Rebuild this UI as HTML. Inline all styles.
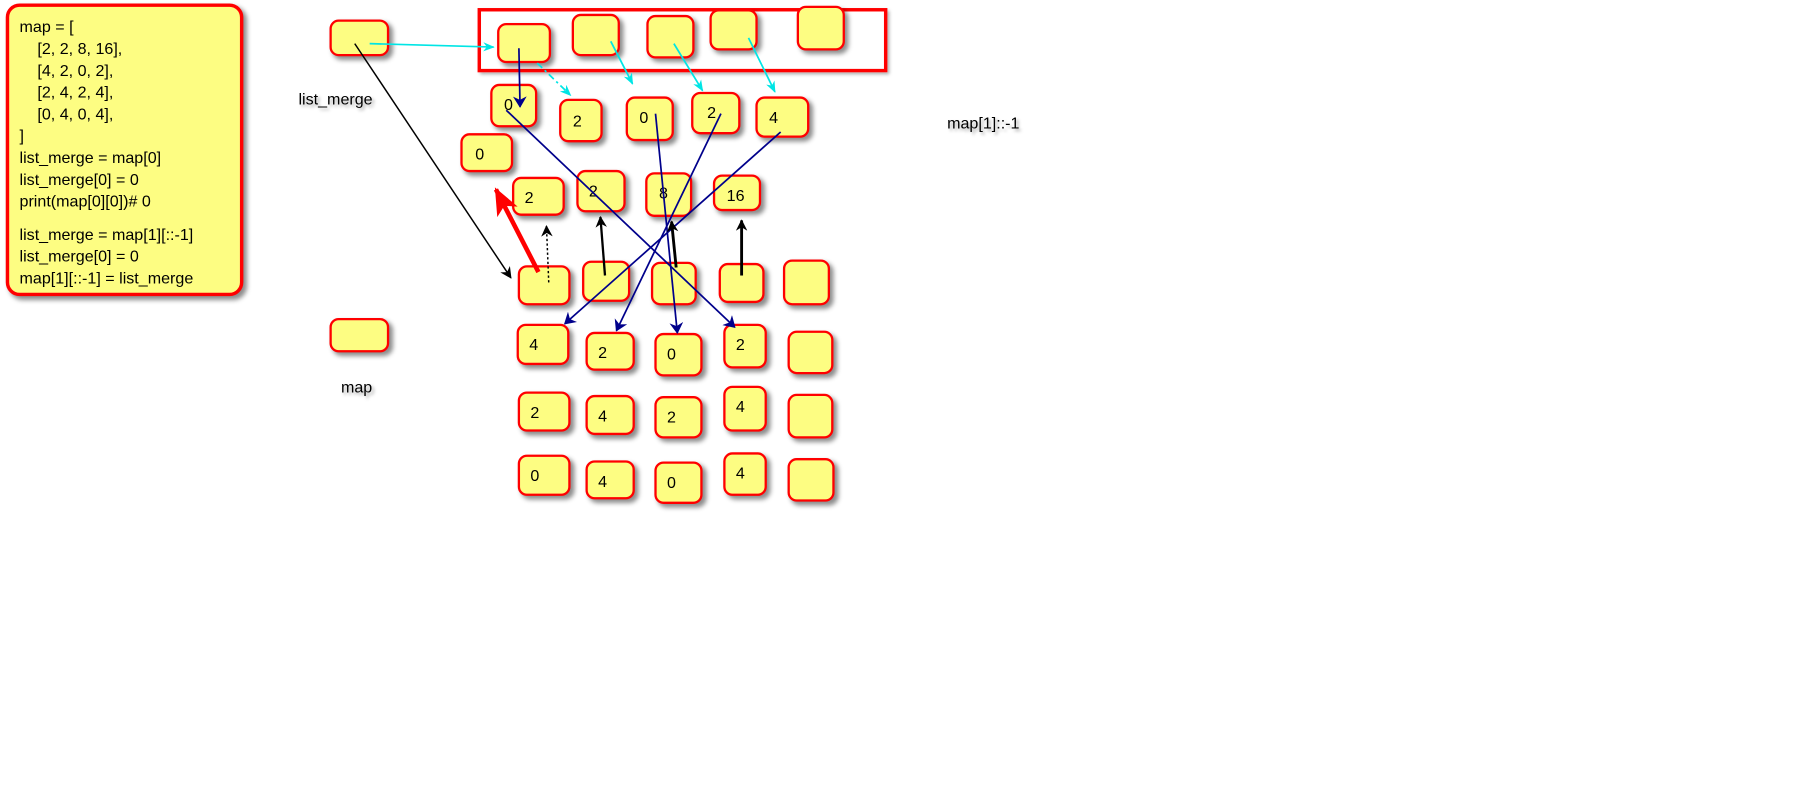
<!DOCTYPE html>
<html><head><meta charset="utf-8"><style>
html,body{margin:0;padding:0;background:#fff;width:1800px;height:800px;overflow:hidden}
#w{position:absolute;left:0;top:0;width:1568px;height:697px;transform:scale(1.148);transform-origin:0 0;font-family:"Liberation Sans",Arial,sans-serif}
.b{position:absolute;box-sizing:border-box;background:#fdfd82;border:2.5px solid #f00;border-radius:8px;box-shadow:3px 3px 4px rgba(0,0,0,.45);font-size:14px;color:#000;padding:8px 0 0 9px}
.t{position:absolute;font-size:14px;color:#000;text-shadow:2px 2px 3px rgba(0,0,0,.35)}
#code{position:absolute;left:5px;top:3px;width:207px;height:255px;box-sizing:border-box;background:#fdfd82;border:3px solid #f00;border-radius:12px;box-shadow:3px 3px 4px rgba(0,0,0,.45);font-size:14px;line-height:19px;padding:8px 0 0 9px;white-space:pre}
#frame{position:absolute;left:416px;top:7px;width:357px;height:56px;box-sizing:border-box;border:3px solid #f00;box-shadow:2px 2px 3px rgba(0,0,0,.35)}
svg{position:absolute;left:0;top:0}
</style></head><body><div id="w">
<div id="code">map = [
    [2, 2, 8, 16],
    [4, 2, 0, 2],
    [2, 4, 2, 4],
    [0, 4, 0, 4],
]
list_merge = map[0]
list_merge[0] = 0
print(map[0][0])# 0
<span style="display:block;height:10px;line-height:10px"> </span>list_merge = map[1][::-1]
list_merge[0] = 0
map[1][::-1] = list_merge</div>
<div id="frame"></div>
<div class="t" style="left:260px;top:78px">list_merge</div>
<div class="t" style="left:297px;top:329px">map</div>
<div class="t" style="left:825px;top:99px">map[1]::-1</div>

<div class="b" style="left:287px;top:17px;width:52px;height:32px"></div>
<div class="b" style="left:287px;top:277px;width:52px;height:30px"></div>

<div class="b" style="left:433px;top:20px;width:47px;height:35px"></div>
<div class="b" style="left:498px;top:12px;width:42px;height:37px"></div>
<div class="b" style="left:563px;top:13px;width:42px;height:38px"></div>
<div class="b" style="left:618px;top:8px;width:42px;height:36px"></div>
<div class="b" style="left:694px;top:5px;width:42px;height:39px"></div>

<div class="b" style="left:427px;top:73px;width:41px;height:38px;padding-left:10px">0</div>
<div class="b" style="left:487px;top:86px;width:38px;height:38px;padding:9px 0 0 10px">2</div>
<div class="b" style="left:545px;top:84px;width:42px;height:39px;padding-left:10px">0</div>
<div class="b" style="left:602px;top:80px;width:43px;height:37px;padding-left:12px">2</div>
<div class="b" style="left:658px;top:84px;width:47px;height:36px;padding-left:10px">4</div>

<div class="b" style="left:401px;top:116px;width:46px;height:34px;padding-left:11px">0</div>

<div class="b" style="left:446px;top:154px;width:46px;height:34px">2</div>
<div class="b" style="left:502px;top:148px;width:43px;height:37px">2</div>
<div class="b" style="left:562px;top:150px;width:41px;height:39px;padding-left:10px">8</div>
<div class="b" style="left:621px;top:152px;width:42px;height:32px;padding-left:10px">16</div>

<div class="b" style="left:451px;top:231px;width:46px;height:35px"></div>
<div class="b" style="left:507px;top:227px;width:42px;height:36px"></div>
<div class="b" style="left:567px;top:228px;width:40px;height:38px"></div>
<div class="b" style="left:626px;top:229px;width:40px;height:35px"></div>
<div class="b" style="left:682px;top:226px;width:41px;height:40px"></div>

<div class="b" style="left:450px;top:282px;width:46px;height:36px">4</div>
<div class="b" style="left:510px;top:289px;width:43px;height:34px">2</div>
<div class="b" style="left:570px;top:290px;width:42px;height:38px">0</div>
<div class="b" style="left:630px;top:282px;width:38px;height:39px">2</div>
<div class="b" style="left:686px;top:288px;width:40px;height:38px"></div>

<div class="b" style="left:451px;top:341px;width:46px;height:35px">2</div>
<div class="b" style="left:510px;top:344px;width:43px;height:35px">4</div>
<div class="b" style="left:570px;top:345px;width:42px;height:37px">2</div>
<div class="b" style="left:630px;top:336px;width:38px;height:40px">4</div>
<div class="b" style="left:686px;top:343px;width:40px;height:39px"></div>

<div class="b" style="left:451px;top:396px;width:46px;height:36px">0</div>
<div class="b" style="left:510px;top:401px;width:43px;height:34px">4</div>
<div class="b" style="left:570px;top:402px;width:42px;height:37px">0</div>
<div class="b" style="left:630px;top:394px;width:38px;height:38px">4</div>
<div class="b" style="left:686px;top:399px;width:41px;height:38px"></div>

<svg width="1568" height="697" viewBox="0 0 1568 697">
<defs>
<marker id="ac" markerWidth="10" markerHeight="8" refX="9" refY="4" orient="auto" markerUnits="userSpaceOnUse"><path d="M0,0 L10,4 L0,8 L3,4z" fill="#00e5e5"/></marker>
<marker id="an" markerWidth="10" markerHeight="12" refX="9" refY="6" orient="auto" markerUnits="userSpaceOnUse"><path d="M0,0 L10,6 L0,12 L3,6z" fill="#00008b"/></marker>
<marker id="ak" markerWidth="10" markerHeight="10" refX="9" refY="5" orient="auto" markerUnits="userSpaceOnUse"><path d="M0,0 L10,5 L0,10 L3,5z" fill="#000"/></marker>
<marker id="ar" markerWidth="24" markerHeight="20" refX="22" refY="10" orient="auto" markerUnits="userSpaceOnUse"><path d="M0,0 L24,10 L0,20 L6,10z" fill="#f00"/></marker>
</defs>
<g stroke="#00e5e5" stroke-width="1.5" fill="none">
<path d="M322,38 L430,41" marker-end="url(#ac)"/>
<path d="M468,55 L497,83" stroke-dasharray="6,3,2,3" marker-end="url(#ac)"/>
<path d="M532,36 L551,73" marker-end="url(#ac)"/>
<path d="M587,38 L612,79" marker-end="url(#ac)"/>
<path d="M652,33 L675,80" marker-end="url(#ac)"/>
</g>
<g stroke="#00008b" stroke-width="1.5" fill="none">
<path d="M452,42 L453,93" marker-end="url(#an)"/>
<path d="M441,96 L640,285" marker-end="url(#an)"/>
<path d="M571,99 L590,290" marker-end="url(#an)"/>
<path d="M628,99 L537,288" marker-end="url(#an)"/>
<path d="M680,115 L492,282" marker-end="url(#an)"/>
</g>
<g stroke="#000" fill="none">
<path d="M309,38 L445,242" stroke-width="1.3" marker-end="url(#ak)"/>
<path d="M527,240 L523,189" stroke-width="2" marker-end="url(#ak)"/>
<path d="M589,233 L585,193" stroke-width="2.5" marker-end="url(#ak)"/>
<path d="M646,240 L646,192" stroke-width="2.5" marker-end="url(#ak)"/>
<path d="M478,246 L476,197" stroke-width="1.3" stroke-dasharray="2,2" marker-end="url(#ak)"/>
</g>
<path d="M469,237 L432,165" stroke="#f00" stroke-width="4" fill="none" marker-end="url(#ar)"/>
</svg>
</div></body></html>
